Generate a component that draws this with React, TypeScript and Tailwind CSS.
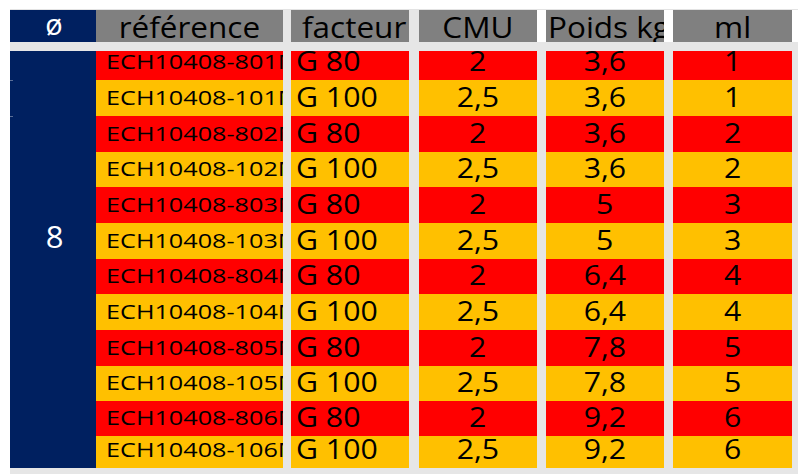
type Row = {
  ref: string;
  grade: string;
  cmu: string;
  kg: string;
  ml: string;
  h: string;
};

const rows: Row[] = [
  { ref: 'ECH10408-801M', grade: 'G 80', cmu: '2', kg: '3,6', ml: '1', h: 'h-[29px]' },
  { ref: 'ECH10408-101M', grade: 'G 100', cmu: '2,5', kg: '3,6', ml: '1', h: 'h-[36px]' },
  { ref: 'ECH10408-802M', grade: 'G 80', cmu: '2', kg: '3,6', ml: '2', h: 'h-[36px]' },
  { ref: 'ECH10408-102M', grade: 'G 100', cmu: '2,5', kg: '3,6', ml: '2', h: 'h-[35px]' },
  { ref: 'ECH10408-803M', grade: 'G 80', cmu: '2', kg: '5', ml: '3', h: 'h-[36px]' },
  { ref: 'ECH10408-103M', grade: 'G 100', cmu: '2,5', kg: '5', ml: '3', h: 'h-[36px]' },
  { ref: 'ECH10408-804M', grade: 'G 80', cmu: '2', kg: '6,4', ml: '4', h: 'h-[35px]' },
  { ref: 'ECH10408-104M', grade: 'G 100', cmu: '2,5', kg: '6,4', ml: '4', h: 'h-[36px]' },
  { ref: 'ECH10408-805M', grade: 'G 80', cmu: '2', kg: '7,8', ml: '5', h: 'h-[36px]' },
  { ref: 'ECH10408-105M', grade: 'G 100', cmu: '2,5', kg: '7,8', ml: '5', h: 'h-[35px]' },
  { ref: 'ECH10408-806M', grade: 'G 80', cmu: '2', kg: '9,2', ml: '6', h: 'h-[35px]' },
  { ref: 'ECH10408-106M', grade: 'G 100', cmu: '2,5', kg: '9,2', ml: '6', h: 'h-[32px]' },
];

export default function App() {
  return (
    <div className="w-[798px] h-[474px] bg-white overflow-hidden font-['Open_Sans',sans-serif] text-black">
      <div className="h-[9px]" />
      <div className="ml-[10px] h-[1px] bg-[#e3e3e3]" />

      {/* header */}
      <div className="ml-[10px] flex h-[32px] bg-white">
        <div className="w-[86px] bg-[#002060] text-white flex items-end justify-center pb-[4px] pl-[2px] overflow-hidden">
          <span className="text-[29px] leading-none">ø</span>
        </div>
        <HeaderCell w="w-[187px]" label="référence" />
        <div className="w-[8px] bg-[#e6e6e6]" />
        <HeaderCell w="w-[118px]" label="facteur" pad="pl-[11px]" />
        <div className="w-[10px] bg-[#e6e6e6]" />
        <HeaderCell w="w-[118px]" label="CMU" />
        <div className="w-[9px]" />
        <HeaderCell w="w-[118px]" label="Poids kg" pad="pl-[2px]" />
        <div className="w-[9px]" />
        <HeaderCell w="w-[119px]" label="ml" />
      </div>

      <div className="ml-[10px] h-[9px] bg-[#e6e6e6]" />

      {/* body */}
      <div className="ml-[10px] flex bg-[#e6e6e6] h-[423px]">
        <div className="w-[86px] h-[417px] bg-[#002060] relative">
          <span className="absolute left-0 top-[29px] w-[3px] h-[1px] bg-[#5a6d96]" />
          <span className="absolute left-0 top-[65px] w-[3px] h-[1px] bg-[#5a6d96]" />
          <div className="pt-[170px] pl-[3px] text-center text-white text-[31px] leading-none">8</div>
        </div>
        <div className="flex flex-col">
          {rows.map((r) => {
            const bg = r.grade === 'G 80' ? 'bg-[#ff0000]' : 'bg-[#ffc000]';
            return (
              <div key={r.ref} className={`flex ${r.h}`}>
                <div className={`w-[187px] ${bg} flex items-end pl-[10px] pb-[8px] overflow-hidden whitespace-nowrap`}>
                  <span className="inline-block origin-left scale-x-[1.26] text-[20px] leading-none">{r.ref}</span>
                </div>
                <div className="w-[8px]" />
                <div className={`w-[118px] ${bg} flex items-end pl-[5px] pb-[6px] overflow-hidden whitespace-nowrap`}>
                  <span className="inline-block origin-left scale-x-[1.12] text-[27px] leading-none">{r.grade}</span>
                </div>
                <div className="w-[10px]" />
                <BodyCell w="w-[118px]" bg={bg} value={r.cmu} />
                <div className="w-[9px]" />
                <BodyCell w="w-[118px]" bg={bg} value={r.kg} />
                <div className="w-[9px]" />
                <BodyCell w="w-[119px]" bg={bg} value={r.ml} />
              </div>
            );
          })}
        </div>
      </div>
    </div>
  );
}

function HeaderCell({ w, label, pad }: { w: string; label: string; pad?: string }) {
  return (
    <div
      className={`${w} bg-[#808080] flex items-end overflow-hidden whitespace-nowrap ${
        pad ? `justify-start ${pad}` : 'justify-center'
      }`}
    >
      <span className={`inline-block scale-x-[1.05] text-[30px] leading-none ${pad ? 'origin-left' : ''}`}>
        {label}
      </span>
    </div>
  );
}

function BodyCell({ w, bg, value }: { w: string; bg: string; value: string }) {
  return (
    <div className={`${w} ${bg} flex items-end justify-center pb-[6px] overflow-hidden`}>
      <span className="inline-block scale-x-[1.12] text-[27px] leading-none">{value}</span>
    </div>
  );
}
